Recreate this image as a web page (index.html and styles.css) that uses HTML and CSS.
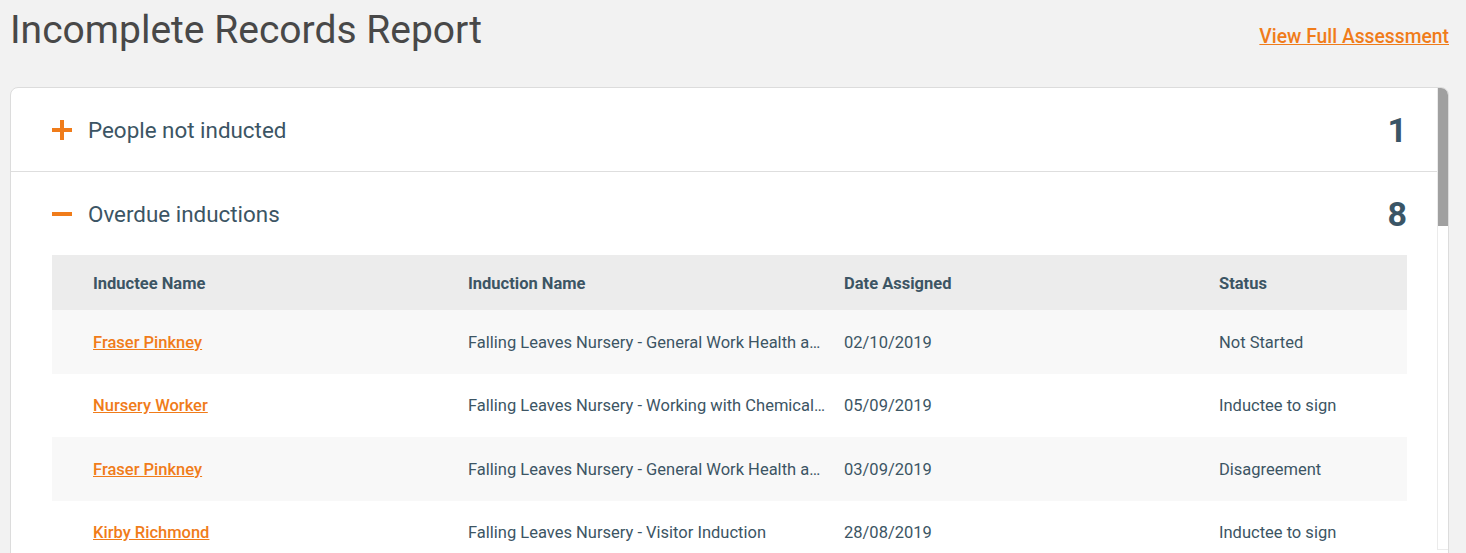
FILE: index.html
```html
<!DOCTYPE html>
<html lang="en">
<head>
    <meta charset="UTF-8">
    <meta name="viewport" content="width=device-width, initial-scale=1.0">
    <title>Incomplete Records Report</title>
    <link rel="stylesheet" href="styles.css">
</head>
<body>

<div class="report">
    <div class="report-header">
        <h1>Incomplete Records Report</h1>
        <a href="#" class="full-link">View Full Assessment</a>
    </div>

    <div class="report-card">
        <div class="card-body">
            <div class="section">
                <div class="section-head">
                    <svg class="toggle" width="20" height="20" viewBox="0 0 20 20"><path d="M0 10h20M10 0v20" stroke="#f07c1a" stroke-width="4"/></svg>
                    <span class="section-title">People not inducted</span>
                    <span class="section-count">1</span>
                </div>
            </div>

            <div class="section open">
                <div class="section-head">
                    <svg class="toggle" width="20" height="20" viewBox="0 0 20 20"><path d="M0 10h20" stroke="#f07c1a" stroke-width="4"/></svg>
                    <span class="section-title">Overdue inductions</span>
                    <span class="section-count">8</span>
                </div>
                <table class="records">
                    <colgroup>
                        <col class="c-name">
                        <col class="c-induction">
                        <col class="c-date">
                        <col>
                    </colgroup>
                    <thead>
                        <tr>
                            <th>Inductee Name</th>
                            <th>Induction Name</th>
                            <th>Date Assigned</th>
                            <th>Status</th>
                        </tr>
                    </thead>
                    <tbody>
                        <tr>
                            <td><a href="#">Fraser Pinkney</a></td>
                            <td>Falling Leaves Nursery - General Work Health and Safety Induction</td>
                            <td>02/10/2019</td>
                            <td>Not Started</td>
                        </tr>
                        <tr>
                            <td><a href="#">Nursery Worker</a></td>
                            <td>Falling Leaves Nursery - Working with Chemicals Induction</td>
                            <td>05/09/2019</td>
                            <td>Inductee to sign</td>
                        </tr>
                        <tr>
                            <td><a href="#">Fraser Pinkney</a></td>
                            <td>Falling Leaves Nursery - General Work Health and Safety Induction</td>
                            <td>03/09/2019</td>
                            <td>Disagreement</td>
                        </tr>
                        <tr>
                            <td><a href="#">Kirby Richmond</a></td>
                            <td>Falling Leaves Nursery - Visitor Induction</td>
                            <td>28/08/2019</td>
                            <td>Inductee to sign</td>
                        </tr>
                        <tr>
                            <td><a href="#">Nursery Worker</a></td>
                            <td>Falling Leaves Nursery - Visitor Induction</td>
                            <td>21/08/2019</td>
                            <td>Not Started</td>
                        </tr>
                        <tr>
                            <td><a href="#">Kirby Richmond</a></td>
                            <td>Falling Leaves Nursery - Working with Chemicals Induction</td>
                            <td>14/08/2019</td>
                            <td>Not Started</td>
                        </tr>
                        <tr>
                            <td><a href="#">Fraser Pinkney</a></td>
                            <td>Falling Leaves Nursery - Visitor Induction</td>
                            <td>07/08/2019</td>
                            <td>Inductee to sign</td>
                        </tr>
                        <tr>
                            <td><a href="#">Nursery Worker</a></td>
                            <td>Falling Leaves Nursery - General Work Health and Safety Induction</td>
                            <td>31/07/2019</td>
                            <td>Disagreement</td>
                        </tr>
                    </tbody>
                </table>
            </div>

            <div class="section">
                <div class="section-head">
                    <svg class="toggle" width="20" height="20" viewBox="0 0 20 20"><path d="M0 10h20M10 0v20" stroke="#f07c1a" stroke-width="4"/></svg>
                    <span class="section-title">Expired inductions</span>
                    <span class="section-count">3</span>
                </div>
            </div>
        </div>
        <!-- fake scrollbar, the card scrolls in the real app -->
        <div class="scrollbar">
            <div class="scrollbar-thumb"></div>
        </div>
    </div>
</div>

</body>
</html>
```

FILE: styles.css
```css
body {
    margin: 0;
    font-family: Roboto, "Liberation Sans", Arial, sans-serif;
    background-color: #f2f2f2;
    color: #3c5564;
    overflow: hidden;
}
.report {
    padding: 0 17px 0 10px;
}
.report-header {
    display: flex;
    justify-content: space-between;
    align-items: baseline;
    padding-top: 6px;
    margin-bottom: 33px;
}
.report-header h1 {
    margin: 0;
    font-size: 39px;
    line-height: 48px;
    font-weight: 400;
    color: #484848;
}
.full-link {
    font-size: 19.3px;
    font-weight: 500;
    color: #f07c1a;
}
.report-card {
    display: flex;
    height: 490px;
    overflow: hidden;
    background: #fff;
    border: 1px solid #dcdcdc;
    border-radius: 8px;
}
.card-body {
    flex: 1;
    min-width: 0;
    overflow: hidden;
}
.scrollbar {
    flex: none;
    align-self: flex-start;
    width: 10px;
    height: 461px;
    border-left: 1px solid #ebebeb;
    border-bottom: 1px solid #ebebeb;
    background: #fff;
}
.scrollbar-thumb {
    height: 138px;
    background: #a0a0a0;
}
.section {
    border-bottom: 1px solid #dedede;
}
.section.open {
    border-bottom: none;
    padding-bottom: 40px;
}
.section-head {
    display: flex;
    align-items: center;
    height: 83px;
    padding: 0 30px 0 41px;
}
.toggle {
    flex: none;
    margin-right: 16px;
}
.section-title {
    flex: 1;
    font-size: 22.4px;
}
.section-count {
    font-size: 34px;
    font-weight: 700;
    color: #3a5566;
}
.records {
    width: calc(100% - 71px);
    margin-left: 41px;
    border-collapse: collapse;
    table-layout: fixed;
    font-size: 16.5px;
}
.records col.c-name {
    width: 416px;
}
.records col.c-induction {
    width: 376px;
}
.records col.c-date {
    width: 375px;
}
.records th,
.records td {
    text-align: left;
    padding: 0 16px 0 0;
    white-space: nowrap;
    overflow: hidden;
    text-overflow: ellipsis;
}
.records th:first-child,
.records td:first-child {
    padding-left: 41px;
}
.records th {
    height: 53px;
    padding-top: 2px;
    background: #ececec;
    font-weight: 700;
}
.records td {
    height: 62.5px;
    padding-top: 1px;
}
.records tbody tr:nth-child(odd) {
    background: #f8f8f8;
}
.records a {
    color: #f07c1a;
    font-weight: 500;
}
```
